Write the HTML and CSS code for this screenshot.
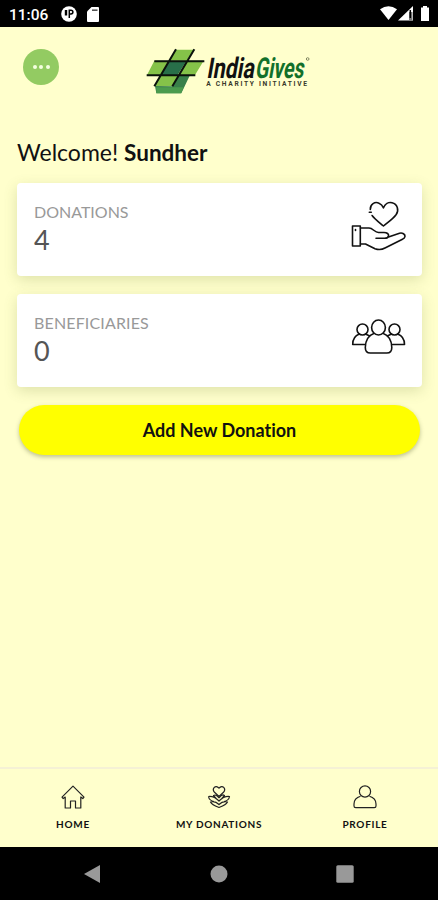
FILE: index.html
```html
<!DOCTYPE html>
<html lang="en">
<head>
    <meta charset="UTF-8">
    <meta name="viewport" content="width=device-width, initial-scale=1.0">
    <title>IndiaGives</title>
    <link rel="stylesheet" href="styles.css">
</head>
<body>
    <div class="status-bar">
        <span class="time">11:06</span>
        <svg class="status-app" width="16" height="16" viewBox="0 0 16 16">
            <circle cx="8" cy="8" r="7.8" fill="#fff"/>
            <path d="M5 4v5.500" fill="none" stroke="#000" stroke-width="2.400"/>
            <path d="M8.300 12V4.200h1.700a1.900 1.900 0 0 1 0 3.800H8.300" fill="none" stroke="#000" stroke-width="1.500"/>
        </svg>
        <svg class="status-card" width="12" height="15" viewBox="0 0 12 15">
            <path d="M4.5 0H11a1 1 0 0 1 1 1v13a1 1 0 0 1-1 1H1a1 1 0 0 1-1-1V4.500z" fill="#fff"/>
            <path d="M5 3.200h5.500" stroke="#555" stroke-width="1.600"/>
        </svg>
        <svg class="status-right" width="50" height="16" viewBox="0 0 50 16">
            <path d="M0 3.200Q8.500-2.600 17 3.200L8.500 14z" fill="#fff"/>
            <path d="M33 0v14.500H18z" fill="#fff"/>
            <path d="M29 6h3.500v8H29z" fill="#777"/>
            <path d="M30.300 4v8" stroke="#000" stroke-width="1.500"/>
            <path d="M43 0h4v1.500h2V15h-8V1.500h2z" fill="#fff"/>
        </svg>
    </div>

    <div class="header">
        <button class="menu"><i></i><i></i><i></i></button>
        <svg class="logo" width="180" height="60" viewBox="0 0 540 180">
            <path d="M86 62h54l-27 43H60z" fill="#286f49"/>
            <path d="M45 138l4 22h75l26-55h-37l-16 34z" fill="#39804a"/>
            <path d="M49 142h82l-8 18H49z" fill="#4b9b4d"/>
            <path d="M108 29h54l-22 33H87zM43 62h43l-24 43H21zM140 62h51l-26 43h-52zM62 105h52l-17 33H45z" fill="#85c249"/>
            <path d="M43 64h150M20 106h146M108 28L43 139M163 28L97 139" fill="none" stroke="#0b120c" stroke-width="6"/>
            <g transform="translate(199 114) skewX(-10)">
                <text class="logo-name" textLength="142" lengthAdjust="spacingAndGlyphs">India</text>
                <text class="logo-name green" x="145" textLength="146" lengthAdjust="spacingAndGlyphs">Gives</text>
            </g>
            <text class="logo-tag" x="199" y="139" textLength="302">A CHARITY INITIATIVE</text>
            <circle cx="503" cy="57" r="4" fill="none" stroke="#6d7350" stroke-width="2.500"/>
        </svg>
    </div>

    <div class="content">
        <h1>Welcome! <b>Sundher</b></h1>

        <div class="card">
            <div>
                <div class="label">DONATIONS</div>
                <div class="value">4</div>
            </div>
            <svg class="card-icon" width="56" height="52" viewBox="0 0 56 52">
                <path d="M19.3 9.5C19 4 24 1.300 28 3.200c2 .8 3.500 2.400 4.500 4.600C34 4 37.500 1.800 41 2.700c5.500 1.300 7.200 7.300 4.200 11.800C42 19 37 22.300 32.500 26c-4-3.400-8.500-6.500-11.400-10.500"/>
                <path d="M18.300 12.200h2"/>
                <path d="M1.500 26h7.800v20H1.500zM4.500 29.500v1"/>
                <path d="M9.500 28H18c4 0 5.500 4.500 9.500 4.500H33c3 0 5 1.500 4.500 3.500-.3 1.800-2 2.300-4 2.300H25M37.500 37l11-3.800c3-.9 5.800 1.200 5.500 3.300-.1 1.500-1.500 2.300-3 3L34 48c-3 1.700-7 1.800-10 .7L14.500 44H9.500"/>
            </svg>
        </div>

        <div class="card">
            <div>
                <div class="label spaced">BENEFICIARIES</div>
                <div class="value">0</div>
            </div>
            <svg class="card-icon" width="56" height="52" viewBox="0 0 56 52">
                <ellipse cx="27.500" cy="16.500" rx="6.900" ry="7.500"/>
                <circle cx="11.500" cy="18.500" r="5.500"/>
                <circle cx="43.500" cy="18.500" r="5.500"/>
                <path d="M22.800 22.500c-5 1.500-8.500 7-8.500 14 0 3.500 1.700 5.500 5 5.500h16.500c3.300 0 5-2 5-5.500 0-7-3.500-12.500-8.500-14"/>
                <path d="M8.300 23c-4 1.500-6.600 5-6.600 10.500h12.500M14.500 23l4.200 2M46.700 23c4 1.500 6.800 5 6.800 10.500H41M40.500 23l-4.200 2"/>
            </svg>
        </div>

        <button class="add">Add New Donation</button>
    </div>

    <div class="tabs">
        <div class="tab">
            <svg width="24" height="24" viewBox="0 0 24 24">
                <path d="M1 12.200L12 1.200l11 11-1.200 1.300-2-1.500v11h-5.300v-7h-5v7H4.200V12l-2 1.500z"/>
            </svg>
            <span>HOME</span>
        </div>
        <div class="tab">
            <svg width="24" height="24" viewBox="0 0 24 24">
                <path d="M12 11.500L7.500 7.300C4.500 4 8.500-1 12 3.200c3.500-4.200 7.500.8 4.500 4.100z"/>
                <path d="M12 13c-2-3-4-3.500-5.500-2.500L9.500 14M12 13c2-3 4-3.500 5.500-2.500L14.500 14M1.500 11.500c4-.5 7 1 10.500 4.500 3.500-3.500 6.500-5 10.500-4.500-.5 3-3 4.500-5.500 5M1.500 11.500c.5 3 3 4.500 5.500 5M3.500 17c3-1 6 0 8.500 2.500 2.500-2.500 5.500-3.500 8.500-2.500-1.500 3-4.500 4-8.500 5.500-4-1.500-7-2.500-8.500-5.500z"/>
            </svg>
            <span>MY DONATIONS</span>
        </div>
        <div class="tab">
            <svg width="24" height="24" viewBox="0 0 24 24">
                <circle cx="12" cy="6.500" r="5.600"/>
                <path d="M7.500 11.300C3.500 12.500 1 15 1 19v2c0 1 .5 1.700 1.700 1.700h18.600c1.200 0 1.700-.7 1.700-1.700v-2c0-4-2.500-6.500-6.500-7.700"/>
            </svg>
            <span>PROFILE</span>
        </div>
    </div>

    <div class="nav-bar">
        <svg width="18" height="20" viewBox="0 0 18 20"><path d="M17 1v18L1 10z"/></svg>
        <svg width="18" height="20" viewBox="0 0 18 20"><circle cx="9" cy="10" r="8.500"/></svg>
        <svg width="18" height="20" viewBox="0 0 18 20"><rect x=".3" y="1.300" width="17.400" height="17.500" rx="1.500"/></svg>
    </div>
</body>
</html>
```
FILE: styles.css
```css
body {
    margin: 0;
    height: 900px;
    display: flex;
    flex-direction: column;
    overflow: hidden;
    background: #ffffcc;
    font-family: Lato, sans-serif;
    color: #111;
}
button {
    border: none;
    padding: 0;
    font-family: inherit;
}
svg {
    display: block;
    flex: none;
}
.status-bar {
    height: 27px;
    box-sizing: border-box;
    padding: 1px 8px 0 9px;
    display: flex;
    align-items: center;
    background: #000;
}
.time {
    width: 52px;
    padding-top: 1px;
    font: 500 15.5px Roboto, sans-serif;
    color: #fff;
}
.status-card {
    margin-left: 10px;
}
.status-right {
    margin-left: auto;
}
.header {
    height: 91px;
    box-sizing: border-box;
    padding: 13px 0 0 23px;
    display: flex;
    align-items: flex-start;
}
.menu {
    width: 36px;
    height: 36px;
    margin: 9px 81px 0 0;
    border-radius: 50%;
    background: #93cb62;
    display: flex;
    align-items: center;
    justify-content: center;
    gap: 2.5px;
}
.menu i {
    width: 4px;
    height: 4px;
    border-radius: 50%;
    background: #f5ffdf;
}
.logo {
    overflow: visible;
}
.logo-name {
    font: 700 86px Roboto, sans-serif;
    fill: #111;
}
.logo-name.green {
    fill: #12702a;
}
.logo-tag {
    font: bold 20px "Liberation Sans Narrow", Roboto, sans-serif;
    fill: #38392b;
}
.content {
    flex: 1;
    padding: 19px 16px 0 17px;
}
h1 {
    height: 30px;
    margin: 0 0 16px;
    font-size: 23px;
    line-height: 30px;
    font-weight: 400;
}
h1 b {
    font-size: 22.5px;
}
.card {
    height: 93px;
    box-sizing: border-box;
    margin-bottom: 18px;
    padding: 17px 15px 0 17px;
    display: flex;
    justify-content: space-between;
    background: #fff;
    border-radius: 4px;
    box-shadow: 0 4px 14px rgba(90, 110, 40, 0.2);
}
.label {
    font-size: 16px;
    line-height: 24px;
    color: #999;
}
.label.spaced {
    letter-spacing: 0.15px;
}
.value {
    font-size: 27px;
    line-height: 32px;
    color: #555;
}
.card-icon {
    fill: none;
    stroke: #111;
    stroke-width: 1.6;
    stroke-linecap: round;
    stroke-linejoin: round;
}
.add {
    display: block;
    width: 401px;
    height: 50px;
    margin-left: 2px;
    padding-bottom: 1px;
    border-radius: 25px;
    background: #ffff00;
    box-shadow: 0 2px 4px rgba(70, 80, 30, 0.35);
    font-size: 18px;
    font-weight: 700;
    font-variant-ligatures: none;
    color: #111;
}
.tabs {
    height: 80px;
    box-sizing: border-box;
    border-top: 2px solid #f5f1d5;
    display: grid;
    grid-template-columns: repeat(3, 146px);
}
.tab {
    padding-top: 16px;
    display: flex;
    flex-direction: column;
    align-items: center;
    gap: 9px;
    font-size: 10px;
    line-height: 13px;
    font-weight: 700;
    letter-spacing: 0.7px;
}
.tab svg {
    fill: none;
    stroke: #222;
    stroke-width: 1.2;
    stroke-linejoin: round;
}
.nav-bar {
    height: 53px;
    background: #000;
    display: flex;
    align-items: center;
    justify-content: space-between;
    padding: 0 84px 0 83px;
}
.nav-bar svg {
    fill: #999;
}
```
